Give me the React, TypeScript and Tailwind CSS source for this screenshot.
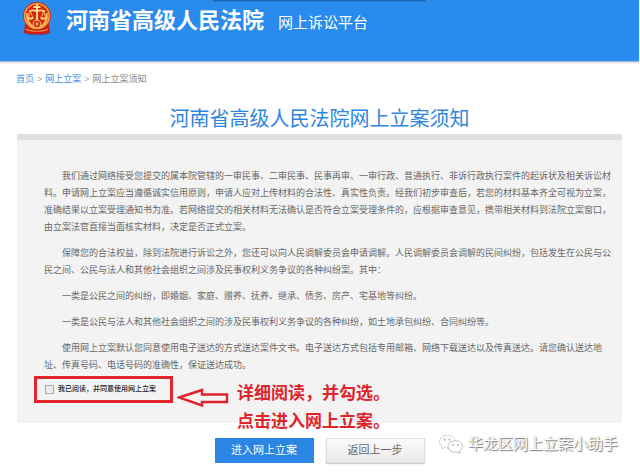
import { useState } from "react";

const paragraphs = [
  "我们通过网络接受您提交的属本院管辖的一审民事、二审民事、民事再审、一审行政、普通执行、非诉行政执行案件的起诉状及相关诉讼材料。申请网上立案应当遵循诚实信用原则，申请人应对上传材料的合法性、真实性负责。经我们初步审查后，若您的材料基本齐全可视为立案，准确结果以立案受理通知书为准。若网络提交的相关材料无法确认是否符合立案受理条件的，应根据审查意见，携带相关材料到法院立案窗口，由立案法官直接当面核实材料，决定是否正式立案。",
  "保障您的合法权益，除到法院进行诉讼之外，您还可以向人民调解委员会申请调解。人民调解委员会调解的民间纠纷，包括发生在公民与公民之间、公民与法人和其他社会组织之间涉及民事权利义务争议的各种纠纷案。其中：",
  "一类是公民之间的纠纷，即婚姻、家庭、赠养、抚养、继承、债务、房产、宅基地等纠纷。",
  "一类是公民与法人和其他社会组织之间的涉及民事权利义务争议的各种纠纷，如土地承包纠纷、合同纠纷等。",
  "使用网上立案默认您同意使用电子送达的方式送达案件文书。电子送达方式包括专用邮箱、网络下载送达以及传真送达。请您确认送达地址、传真号码、电话号码的准确性，保证送达成功。",
];

function CourtEmblem() {
  return (
    <svg viewBox="0 0 30 36" className="h-9 w-[30px] shrink-0" aria-hidden="true">
      <ellipse cx="15.5" cy="33.5" rx="12" ry="2" fill="#1762b4" opacity="0.35" />
      <path d="M3 24l-1 9 7 1.5h12l7-1.5-1-9z" fill="#c81f17" />
      <circle cx="15" cy="16" r="14" fill="#d32a1a" />
      <circle cx="15" cy="16" r="12.3" fill="none" stroke="#f0a33a" strokeWidth="1.6" />
      <circle cx="15" cy="16" r="11" fill="#d8230f" />
      <path
        d="M5.5 13c-1.5 7 2 13 8 15M24.5 13c1.5 7-2 13-8 15"
        fill="none"
        stroke="#f6b450"
        strokeWidth="2.2"
      />
      <path d="M15 4v18M11.5 7h7M7 11.5c3-1.5 5-1.5 8-.5 3-1 5-1 8 .5" fill="none" stroke="#ffe08a" strokeWidth="1.9" />
      <path d="M8.5 11.5L6 18M8.5 11.5l2.5 6.5M21.5 11.5L19 18M21.5 11.5L24 18" stroke="#ffd67a" strokeWidth="0.8" />
      <path d="M5.500 17.500h6.500c-.8 3-5.700 3-6.500 0zM18 17.500h6.500c-.8 3-5.700 3-6.500 0z" fill="#ffe08a" />
      <circle cx="15" cy="24" r="3.8" fill="#ce2413" stroke="#f6b450" strokeWidth="1.2" />
      <path d="M13 24h4M15 22v4" stroke="#ffd67a" strokeWidth="0.9" />
      <path d="M4 29c4 3 18 3 22 0" fill="none" stroke="#e9913a" strokeWidth="1.2" />
    </svg>
  );
}

function WechatMark() {
  return (
    <svg viewBox="0 0 26 20" className="h-5 w-[26px] shrink-0" fill="none" stroke="#b5b5b5" strokeWidth="0.9" aria-hidden="true">
      <path d="M11 14c-1.5.2-3 0-4.400-.5L3.500 15l.6-2.600C-1 8.500 2 1.500 9 1.200c4.300 0 7.300 2.300 8 5.300" strokeDasharray="2 1" />
      <path d="M17.500 6.700c-4.500 0-7.500 2.700-7.500 5.800 0 4 4.500 6.500 9.300 5.500l2.700 1.300-.6-2.300c2-1.200 3.100-2.800 3.100-4.500 0-3.200-3-5.800-7-5.800z" />
      <circle cx="6.5" cy="5.5" r="0.8" />
      <circle cx="11.5" cy="5.5" r="0.8" />
      <circle cx="15" cy="11" r="0.7" />
      <circle cx="20" cy="11" r="0.7" />
    </svg>
  );
}

export default function FilingNoticePage() {
  const [agreed, setAgreed] = useState(false);

  return (
    <div className="min-h-screen bg-white font-['Liberation_Sans','Noto_Sans_CJK_SC',sans-serif]" lang="zh-CN">
      <header className="relative mr-px flex h-[62px] items-start border-b border-[#a9bdd6] bg-[#298bed] pl-[22px] text-white shadow-[0_1px_1px_#d5dfeb]">
        <div className="absolute top-0 left-1/3 h-px w-1/3 bg-[#1c67b5] shadow-[0_1px_1px_#2378cf]" />
        <CourtEmblem />
        <div className="flex items-baseline gap-[14px] pt-[5px] pl-[14px]">
          <h1 className="text-[22px] leading-8 font-bold">河南省高级人民法院</h1>
          <span className="text-[15px] leading-8">网上诉讼平台</span>
        </div>
      </header>

      <nav className="flex items-center gap-[3px] pt-[9px] pl-4 text-[9px] leading-[17px] text-[#888]" aria-label="面包屑">
        <a href="#home" className="text-[#3a8fe6]">首页</a>
        <span className="text-[#aaa]">&gt;</span>
        <a href="#filing" className="text-[#3a8fe6]">网上立案</a>
        <span className="text-[#aaa]">&gt;</span>
        <span>网上立案须知</span>
      </nav>

      <main className="relative mr-[18px] ml-[17px]">
        <h2 className="pt-6 pb-2 text-center text-[20px] leading-[14px] text-[#2f86e0]">河南省高级人民法院网上立案须知</h2>

        <section className="border-t-[6px] border-[#e0e0e0] bg-[#f3f3f3] pt-7 pr-[10px] pb-5 pl-[27px]">
          <div className="space-y-[9px] text-[9px] leading-[17px] text-[#686868]">
            {paragraphs.map((text) => (
              <p key={text} className="indent-[18px]">
                {text}
              </p>
            ))}
          </div>

          <div className="relative mt-[2px] -ml-[10px] flex items-center">
            <label className="flex h-[27px] w-[139px] items-center gap-1 border-[3px] border-[#e0242c] pl-2 text-[7px] font-medium text-[#222]">
              <input
                type="checkbox"
                checked={agreed}
                onChange={(event) => setAgreed(event.target.checked)}
                className="size-[9px] appearance-none border border-[#aaa] bg-[#ededed] checked:bg-[#298bed]"
              />
              我已阅读，并同意使用网上立案
            </label>
            <div className="absolute top-1 left-[143px] flex gap-2 text-[17px] leading-7 font-bold text-[#e0242c]">
              <svg viewBox="0 0 52 20" className="mt-2 h-5 w-[52px] shrink-0" aria-hidden="true">
                <path d="M2 9.500L25 2v4.500h25v7.500H25v3.500z" fill="none" stroke="#e0242c" strokeWidth="2.4" />
              </svg>
              <p className="whitespace-nowrap">
                详细阅读，并勾选。
                <br />
                点击进入网上立案。
              </p>
            </div>
          </div>
        </section>

        <div className="flex justify-center gap-3 pt-[15px] text-[11px]">
          <button type="button" className="h-[25px] w-[99px] bg-[#2b85e2] text-white">
            进入网上立案
          </button>
          <button
            type="button"
            className="h-[25px] w-[99px] border border-[#ddd] bg-linear-to-b from-[#fbfbfb] to-[#e9e9e9] text-[#666] shadow-[0_1px_1px_#ccc]"
          >
            返回上一步
          </button>
        </div>

        <div className="absolute right-1 bottom-2 flex items-center gap-1 text-[15px] leading-[22px] text-white">
          <WechatMark />
          <span className="[text-shadow:1px_1px_1px_#777,0_0_1px_#aaa]">华龙区网上立案小助手</span>
        </div>
      </main>
    </div>
  );
}
